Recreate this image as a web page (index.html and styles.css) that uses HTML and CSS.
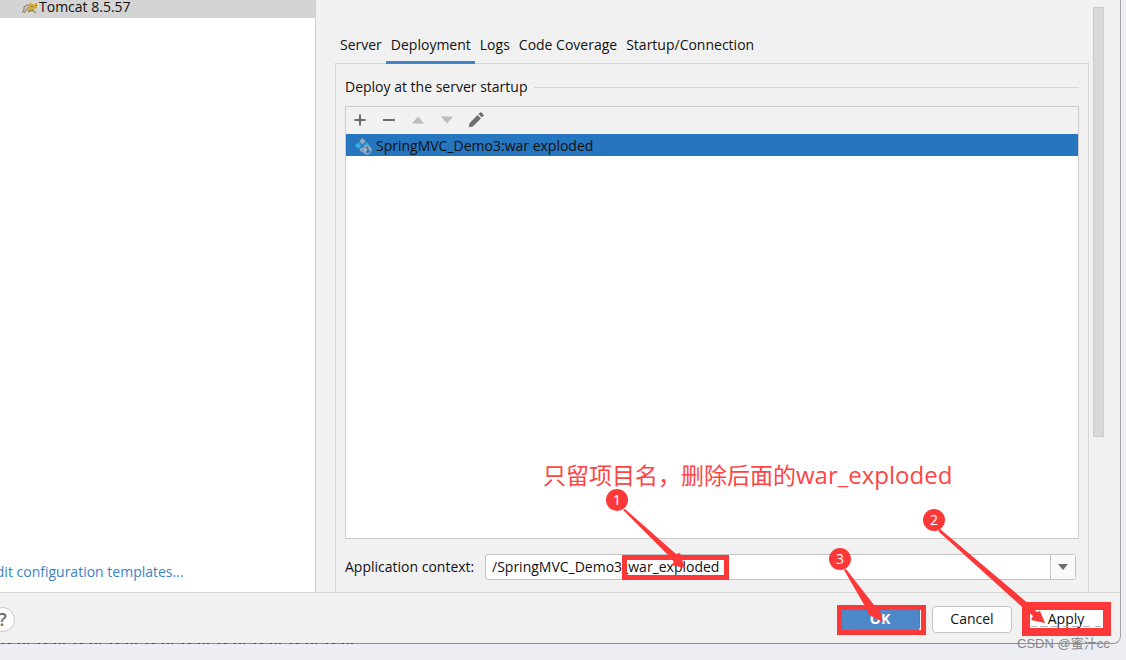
FILE: index.html
```
<!DOCTYPE html>
<html lang="zh-CN">
<head>
    <meta charset="UTF-8">
    <meta name="viewport" content="width=device-width, initial-scale=1.0">
    <title>Run/Debug Configurations</title>
    <link rel="stylesheet" href="styles.css">
</head>
<body>
    <div class="dialog">
        <div class="dialog-body">
            <aside class="sidebar">
                <div class="tree-item">
                    <svg class="tomcat-icon" width="16" height="13" viewBox="0 0 16 13">
                        <path d="M5 7L8 4L8 1L10 3H13L15 1L15 7L12 8L13 11L10 10L6 11Z" fill="#d3ac38"/>
                        <path d="M0 12L2 9L2 6L5 4L8 4M2 12L5 8M6 11L10 9L14 12M9 5L11 6M13 5L15 4" stroke="#75704f" stroke-width="1" fill="none"/>
                        <path d="M4 8L7 6" stroke="#a8a8a0" stroke-width="2" fill="none"/>
                    </svg>
                    <span>Tomcat 8.5.57</span>
                </div>
                <a class="templates-link" href="#">Edit configuration templates...</a>
            </aside>

            <main class="main">
                <nav class="tabs">
                    <button class="tab">Server</button>
                    <button class="tab active">Deployment</button>
                    <button class="tab">Logs</button>
                    <button class="tab">Code Coverage</button>
                    <button class="tab">Startup/Connection</button>
                </nav>
                <section class="panel">
                    <h2 class="panel-title">Deploy at the server startup</h2>
                    <div class="artifacts">
                        <div class="toolbar">
                            <button class="tool" aria-label="Add"><svg width="16" height="16" viewBox="0 0 16 16"><path d="M8 2.5V13.5M2.5 8H13.5" stroke="#6e6e6e" stroke-width="2"/></svg></button>
                            <button class="tool" aria-label="Remove"><svg width="16" height="16" viewBox="0 0 16 16"><path d="M2 8H14" stroke="#6e6e6e" stroke-width="2"/></svg></button>
                            <button class="tool" aria-label="Up"><svg width="16" height="16" viewBox="0 0 16 16"><path d="M2 11.5L8 4.5L14 11.5Z" fill="#bcbcbc"/></svg></button>
                            <button class="tool" aria-label="Down"><svg width="16" height="16" viewBox="0 0 16 16"><path d="M2 4.5L8 11.5L14 4.5Z" fill="#bcbcbc"/></svg></button>
                            <button class="tool" aria-label="Edit"><svg width="16" height="16" viewBox="0 0 16 16"><path d="M.8 15.2L1.5 11.2L9.6 3.1L12.9 6.4L4.8 14.5ZM10.6 2.1L12.1.6Q12.8 0 13.5.6L15.4 2.5Q16 3.2 15.4 3.9L13.9 5.4Z" fill="#6e6e6e"/></svg></button>
                        </div>
                        <div class="artifact">
                            <svg width="17" height="17" viewBox="0 0 17 17">
                                <path d="M7.5 0L10.7 3.2L7.5 6.4L4.3 3.2Z" fill="#9aabb8"/>
                                <path d="M3.3 4.3L6.5 7.5L3.3 10.7L0 7.5Z" fill="#35b0e6"/>
                                <path d="M11.7 4.3L14.5 7L9 8.5L8.5 7.5Z" fill="#35b0e6"/>
                                <path d="M7.5 8.5L7 14.5L4.3 11.7Z" fill="#9aabb8"/>
                                <circle cx="12" cy="12" r="4" fill="#2675bf" stroke="#9aabb8" stroke-width="1.4"/>
                                <path d="M8.5 10L11 9.5L12.5 11.5L11 13L11.5 15.5L9 14ZM13 8.5L15.5 11L14 13Z" fill="#a9b7c2"/>
                            </svg>
                            <span>SpringMVC_Demo3:war exploded</span>
                        </div>
                    </div>
                    <div class="context-row">
                        <label for="context">Application context:</label>
                        <div class="combo">
                            <input type="text" id="context" value="/SpringMVC_Demo3_war_exploded">
                            <button class="combo-arrow" aria-label="Show options"><svg width="10" height="6" viewBox="0 0 10 6"><path d="M0 0H10L5 6Z" fill="#6e6e6e"/></svg></button>
                        </div>
                    </div>
                </section>
                <div class="scrollbar"></div>
            </main>
        </div>

        <footer class="footer">
            <button class="help">?</button>
            <button class="btn primary">OK</button>
            <button class="btn">Cancel</button>
            <button class="btn apply">Apply</button>
        </footer>
    </div>

    <!-- Step annotations drawn over the dialog -->
    <div class="notes">
        <div class="frame frame-context"></div>
        <div class="frame frame-ok"></div>
        <div class="frame frame-apply"></div>
        <svg class="arrows" width="1126" height="660" viewBox="0 0 1126 660">
            <path d="M2 643.5H362" stroke="#4c4c50" stroke-dasharray="2 4 3 7 2 3 2 2 2 9"/>
            <path d="M1031 626.5H1103" stroke="#b9b9b9" stroke-dasharray="6 3 8 3 7 5"/>
            <g fill="#fd3838">
                <path d="M623 510L625 509L676 554L680 553L685 568L671 565L674 562L668 555Z"/>
                <path d="M938 531L940 529L1030 605L1037 612L1040 611L1045 623L1031 620L1033 616L1021 606Z"/>
                <path d="M844 570L846 569L874 605L880 611L883 622L869 615L866 608Z"/>
            </g>
        </svg>
        <p class="note-text">只留项目名，删除后面的<span class="note-name">war_exploded</span></p>
        <span class="pin pin-1">1</span>
        <span class="pin pin-2">2</span>
        <span class="pin pin-3">3</span>
        <span class="watermark">CSDN @蜜汁cc</span>
    </div>
</body>
</html>
```
FILE: styles.css
```
* {
    box-sizing: border-box;
}

body {
    margin: 0;
    height: 100vh;
    overflow: hidden;
    position: relative;
    background-color: #edeef3;
    color: #111;
    font-family: "Open Sans", "Noto Sans CJK SC", sans-serif;
    font-size: 14px;
    line-height: 20px;
}

button,
input {
    font: inherit;
    color: inherit;
    margin: 0;
    padding: 0;
    border: none;
    background: none;
}

.dialog {
    display: flex;
    flex-direction: column;
    height: calc(100vh - 16px);
    margin-right: 5px;
    background-color: #f1f1f1;
    border-right: 1px solid #a0a2a4;
    border-bottom: 1px solid #8e8e8e;
    border-bottom-right-radius: 8px;
}

.dialog-body {
    display: flex;
    flex: 1;
    min-height: 0;
    border-bottom: 1px solid #d6d6d6;
}

/* Left tree */
.sidebar {
    display: flex;
    flex-direction: column;
    justify-content: space-between;
    width: 316px;
    background-color: #fff;
    border-right: 1px solid #d0d0d0;
}

.tree-item {
    display: flex;
    align-items: center;
    gap: 1px;
    height: 18px;
    padding: 0 0 4px 22px;
    background-color: #d4d4d4;
    line-height: 14px;
}

.templates-link {
    margin: 0 0 10px -12px;
    color: #3d82c4;
    text-decoration: none;
    white-space: nowrap;
}

/* Right side */
.main {
    display: grid;
    grid-template-columns: 1fr 11px;
    grid-template-rows: 56px 1fr;
    column-gap: 4px;
    flex: 1;
    min-width: 0;
    padding: 7px 16px 0 19px;
}

.tabs {
    display: flex;
    align-items: flex-end;
    height: 57px;
    z-index: 1;
}

.tab {
    height: 30px;
    padding: 0 4px 5px 5px;
    border-bottom: 3px solid transparent;
    white-space: nowrap;
}

.tab.active {
    border-bottom-color: #4083c9;
}

.panel {
    grid-row: 2;
    display: flex;
    flex-direction: column;
    min-height: 0;
    padding: 13px 9px 12px;
    border: 1px solid #d6d6d6;
    border-bottom: none;
}

.panel-title {
    display: flex;
    align-items: center;
    gap: 7px;
    margin: 0 0 9px;
    font-size: 14px;
    font-weight: normal;
}

.panel-title::after {
    content: "";
    flex: 1;
    height: 1px;
    background-color: #d6d6d6;
}

.artifacts {
    flex: 1;
    background-color: #fff;
    border: 1px solid #cdcdcd;
}

.toolbar {
    display: flex;
    align-items: center;
    gap: 13px;
    height: 27px;
    padding: 0 0 2px 6px;
    background-color: #f1f1f1;
}

.tool {
    display: flex;
    width: 16px;
    height: 16px;
}

.artifact {
    display: flex;
    align-items: center;
    gap: 4px;
    height: 22px;
    padding: 2px 0 0 9px;
    background-color: #2675bf;
}

.context-row {
    display: flex;
    align-items: center;
    margin-top: 15px;
}

.context-row label {
    width: 140px;
}

.combo {
    display: flex;
    flex: 1;
    height: 26px;
    margin-right: 3px;
    background-color: #fff;
    border: 1px solid #c4c4c4;
    border-radius: 3px;
}

.combo input {
    flex: 1;
    min-width: 0;
    padding-left: 6px;
    outline: none;
}

.combo-arrow {
    display: flex;
    align-items: center;
    justify-content: center;
    width: 25px;
    background-color: #fafafa;
    border-left: 1px solid #c4c4c4;
}

.scrollbar {
    grid-column: 2;
    grid-row: 1 / 3;
    height: 430px;
    background-color: #d8d8d8;
    border: 1px solid #cdcdcd;
}

/* Bottom buttons */
.footer {
    display: flex;
    align-items: center;
    gap: 12px;
    height: 50px;
    padding-right: 12px;
}

.help {
    width: 25px;
    height: 25px;
    margin: 2px auto 0 -10px;
    background-color: #fff;
    border: 1px solid #c4c4c4;
    border-radius: 50%;
    color: #6e6e6e;
    font-size: 18px;
    font-weight: 600;
    line-height: 22px;
}

.btn {
    width: 80px;
    height: 27px;
    margin-top: 2px;
    background-color: #fff;
    border: 1px solid #c4c4c4;
    border-radius: 4px;
}

.btn.primary {
    height: 24px;
    background-color: #4d89c9;
    border-color: #4a7fb8;
    color: #fff;
    font-weight: bold;
}

.btn.apply {
    width: 84px;
}

/* Annotations */
.notes {
    position: absolute;
    top: 0;
    right: 0;
    width: 1126px;
    height: 660px;
    pointer-events: none;
}

.frame,
.pin,
.arrows,
.note-text,
.watermark {
    position: absolute;
}

.frame {
    border: 5px solid #fd3838;
}

.frame-context {
    left: 622px;
    top: 555px;
    width: 107px;
    height: 25px;
}

.frame-ok {
    left: 837px;
    top: 605px;
    width: 89px;
    height: 30px;
}

.frame-apply {
    left: 1022px;
    top: 602px;
    width: 89px;
    height: 34px;
    border-width: 8px;
}

.arrows {
    left: 0;
    top: 0;
}

.note-text {
    left: 543px;
    top: 458px;
    margin: 0;
    color: #fd4545;
    font-size: 23px;
    line-height: 34px;
    white-space: nowrap;
}

.note-name {
    font-size: 24px;
}

.pin {
    width: 22px;
    height: 22px;
    border-radius: 50%;
    background-color: #fd3838;
    color: #fff;
    line-height: 22px;
    text-align: center;
}

.pin-1 {
    left: 606px;
    top: 489px;
}

.pin-2 {
    left: 923px;
    top: 509px;
}

.pin-3 {
    left: 829px;
    top: 548px;
}

.watermark {
    left: 1017px;
    top: 634px;
    color: #86878a;
    font-family: "Liberation Sans", "Noto Sans CJK SC", sans-serif;
    font-size: 13px;
    white-space: nowrap;
}
```
